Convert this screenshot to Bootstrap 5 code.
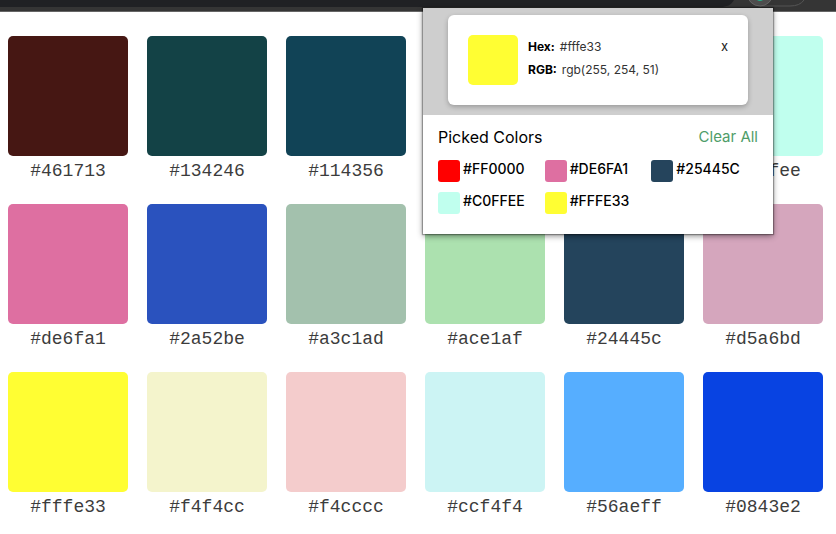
<!DOCTYPE html>
<html lang="en">
<head>
<meta charset="utf-8">
<meta name="viewport" content="width=device-width, initial-scale=1">
<title>Color Picker</title>
<link href="https://cdn.jsdelivr.net/npm/bootstrap@5.3.0/dist/css/bootstrap.min.css" rel="stylesheet">
<style>
body { font-family: Inter, "Open Sans", sans-serif; color: #000; background: #fff; overflow-x: hidden; }
.toolbar { height: 12px; background: #353535; border-bottom: 1px solid #666; }
.toolbar-field { height: 7px; background: #202124; }
.palette { display: grid; grid-template-columns: repeat(auto-fill, 120px); column-gap: 19px; padding: 24px 8px 0; }
.swatch-item { height: 168px; font-family: "Liberation Mono", monospace; font-size: 18px; line-height: 30px; color: #3c3c3c; text-align: center; }
.swatch { height: 120px; border-radius: 5px; }
.column-last { grid-column-start: 6; }
.popup { position: absolute; top: 8px; right: 63px; width: 350px; background: #fff; box-shadow: 0 0 1px 1px rgba(0,0,0,.3), 0 2px 6px rgba(0,0,0,.45); }
.popup-top { background: #cecece; padding: 7px 25px 10px; }
.detail { padding: 20px; gap: 10px; border-radius: 6px; background: #fff; box-shadow: 0 2px 5px rgba(0,0,0,.25); font-size: 12px; line-height: 23px; color: #333; }
.detail-chip { width: 50px; height: 50px; border-radius: 5px; }
.detail dt { color: #000; font-weight: 700; margin-right: 5px; }
.detail dd { font-weight: 400; }
.close-btn { font-size: 13px; line-height: 23px; color: #222; }
.popup-body { padding: 10px 15px 20px; }
.popup-title { font-size: 16px; line-height: 24px; font-weight: 400; }
.clear-btn { font-size: 15px; line-height: 24px; color: #4f9d69; }
.picked { display: grid; grid-template-columns: repeat(3, 1fr); row-gap: 10px; margin-top: 11px; }
.picked li { gap: 3px; font-size: 14px; line-height: 18px; height: 22px; font-weight: 500; }
.chip { width: 22px; height: 22px; border-radius: 3px; }
.c-461713 { background: #461713; } .c-134246 { background: #134246; } .c-114356 { background: #114356; }
.c-c0ffee { background: #c0ffee; } .c-de6fa1 { background: #de6fa1; } .c-2a52be { background: #2a52be; }
.c-a3c1ad { background: #a3c1ad; } .c-ace1af { background: #ace1af; } .c-24445c { background: #24445c; }
.c-d5a6bd { background: #d5a6bd; } .c-fffe33 { background: #fffe33; } .c-f4f4cc { background: #f4f4cc; }
.c-f4cccc { background: #f4cccc; } .c-ccf4f4 { background: #ccf4f4; } .c-56aeff { background: #56aeff; }
.c-0843e2 { background: #0843e2; } .c-ff0000 { background: #ff0000; } .c-25445c { background: #25445c; }
</style>
</head>
<body>
<header class="toolbar d-flex">
  <div class="toolbar-field flex-grow-1"></div>
  <svg width="116" height="11" viewBox="0 0 116 11" aria-hidden="true">
    <path d="M0 0H14C11 5 7 7 0 7Z" fill="#202124"/>
    <path d="M40 6H70Q80 6 84 0" fill="none" stroke="#555" stroke-width="1"/>
    <circle cx="40" cy="-7" r="13" fill="#4d4d4d" stroke="#666"/>
    <path d="M37 0H43Q40 2 37 0Z" fill="#25b28b"/>
  </svg>
</header>
<main class="palette">
  <div class="swatch-item"><div class="swatch c-461713"></div>#461713</div>
  <div class="swatch-item"><div class="swatch c-134246"></div>#134246</div>
  <div class="swatch-item"><div class="swatch c-114356"></div>#114356</div>
  <div class="swatch-item column-last"><div class="swatch c-c0ffee"></div>#c0ffee</div>
  <div class="swatch-item"><div class="swatch c-de6fa1"></div>#de6fa1</div>
  <div class="swatch-item"><div class="swatch c-2a52be"></div>#2a52be</div>
  <div class="swatch-item"><div class="swatch c-a3c1ad"></div>#a3c1ad</div>
  <div class="swatch-item"><div class="swatch c-ace1af"></div>#ace1af</div>
  <div class="swatch-item"><div class="swatch c-24445c"></div>#24445c</div>
  <div class="swatch-item"><div class="swatch c-d5a6bd"></div>#d5a6bd</div>
  <div class="swatch-item"><div class="swatch c-fffe33"></div>#fffe33</div>
  <div class="swatch-item"><div class="swatch c-f4f4cc"></div>#f4f4cc</div>
  <div class="swatch-item"><div class="swatch c-f4cccc"></div>#f4cccc</div>
  <div class="swatch-item"><div class="swatch c-ccf4f4"></div>#ccf4f4</div>
  <div class="swatch-item"><div class="swatch c-56aeff"></div>#56aeff</div>
  <div class="swatch-item"><div class="swatch c-0843e2"></div>#0843e2</div>
</main>
<aside class="popup">
  <div class="popup-top">
    <div class="detail d-flex align-items-start">
      <div class="detail-chip c-fffe33 flex-shrink-0"></div>
      <dl class="mb-0 flex-grow-1">
        <div class="d-flex"><dt>Hex:</dt><dd class="mb-0">#fffe33</dd></div>
        <div class="d-flex"><dt>RGB:</dt><dd class="mb-0">rgb(255, 254, 51)</dd></div>
      </dl>
      <button type="button" class="close-btn border-0 bg-transparent p-0">x</button>
    </div>
  </div>
  <section class="popup-body">
    <div class="d-flex justify-content-between">
      <h1 class="popup-title mb-0">Picked Colors</h1>
      <button type="button" class="clear-btn border-0 bg-transparent p-0">Clear All</button>
    </div>
    <ul class="picked list-unstyled mb-0">
      <li class="d-flex"><span class="chip c-ff0000"></span>#FF0000</li>
      <li class="d-flex"><span class="chip c-de6fa1"></span>#DE6FA1</li>
      <li class="d-flex"><span class="chip c-25445c"></span>#25445C</li>
      <li class="d-flex"><span class="chip c-c0ffee"></span>#C0FFEE</li>
      <li class="d-flex"><span class="chip c-fffe33"></span>#FFFE33</li>
    </ul>
  </section>
</aside>
<script src="https://cdn.jsdelivr.net/npm/bootstrap@5.3.0/dist/js/bootstrap.bundle.min.js"></script>
</body>
</html>
